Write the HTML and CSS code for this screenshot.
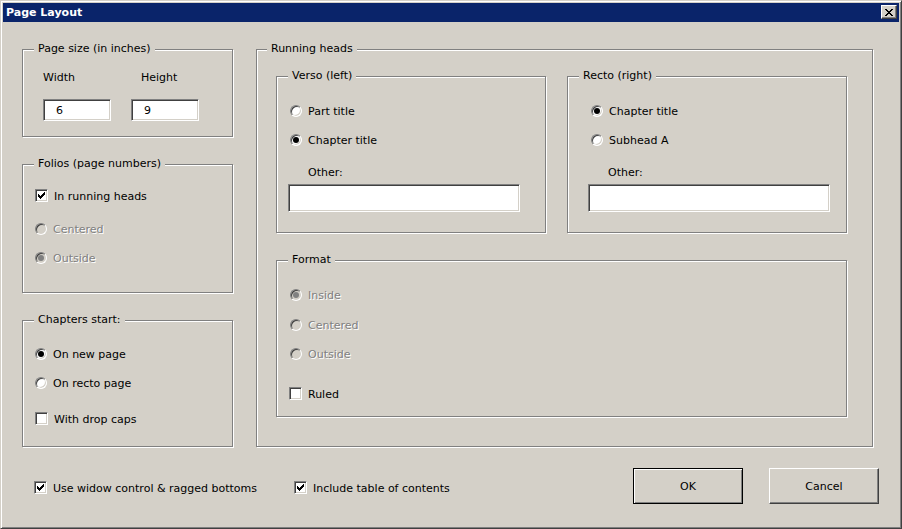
FILE: index.html
```html
<!DOCTYPE html>
<html>
<head>
<meta charset="utf-8">
<title>Page Layout</title>
<link rel="stylesheet" href="styles.css">
</head>
<body>
<div class="window">
  <div class="titlebar">
    <span class="title">Page Layout</span>
    <span class="close">
      <svg width="8" height="7" viewBox="0 0 8 7" shape-rendering="crispEdges"><path d="M0 0h2v1h-2z M6 0h2v1h-2z M1 1h2v1h-2z M5 1h2v1h-2z M2 2h4v1h-4z M3 3h2v1h-2z M2 4h4v1h-4z M1 5h2v1h-2z M5 5h2v1h-2z M0 6h2v1h-2z M6 6h2v1h-2z" fill="#000"/></svg>
    </span>
  </div>
  <div class="body">
    <div class="main">
      <div class="col">
        <div class="group g-size">
          <div class="gtitle">Page size (in inches)</div>
          <div class="size-grid">
            <span>Width</span>
            <span class="h-label">Height</span>
            <input class="num" type="text" value="6">
            <input class="num" type="text" value="9">
          </div>
        </div>
        <div class="group g-folios">
          <div class="gtitle">Folios (page numbers)</div>
          <div class="opt pad12 m18"><span class="check on"><svg width="7" height="7" viewBox="0 0 7 7" shape-rendering="crispEdges"><path d="M6 0h1v1h-1z M5 1h2v1h-2z M0 2h1v1h-1z M4 2h3v1h-3z M0 3h2v1h-2z M3 3h3v1h-3z M0 4h5v1h-5z M1 5h3v1h-3z M2 6h1v1h-1z" fill="#000"/></svg></span>In running heads</div>
          <div class="opt dis pad12 m19"><span class="radio"></span>Centered</div>
          <div class="opt dis pad12 m15"><span class="radio on"></span>Outside</div>
        </div>
        <div class="group g-chap">
          <div class="gtitle">Chapters start:</div>
          <div class="opt pad12 m20"><span class="radio on"></span>On new page</div>
          <div class="opt pad12 m15"><span class="radio"></span>On recto page</div>
          <div class="opt pad12 m22"><span class="check"></span>With drop caps</div>
        </div>
      </div>
      <div class="group g-heads">
        <div class="gtitle">Running heads</div>
        <div class="heads-row">
          <div class="group g-verso">
            <div class="gtitle">Verso (left)</div>
            <div class="opt pad13 m21"><span class="radio"></span>Part title</div>
            <div class="opt pad13 m15"><span class="radio on"></span>Chapter title</div>
            <div class="other-label verso-label">Other:</div>
            <input class="field verso-field" type="text" value="">
          </div>
          <div class="group g-recto">
            <div class="gtitle">Recto (right)</div>
            <div class="opt pad23 m21"><span class="radio on"></span>Chapter title</div>
            <div class="opt pad23 m15"><span class="radio"></span>Subhead A</div>
            <div class="other-label recto-label">Other:</div>
            <input class="field recto-field" type="text" value="">
          </div>
        </div>
        <div class="group g-format">
          <div class="gtitle">Format</div>
          <div class="opt dis pad13 m21"><span class="radio on"></span>Inside</div>
          <div class="opt dis pad13 m16"><span class="radio"></span>Centered</div>
          <div class="opt dis pad13 m15"><span class="radio"></span>Outside</div>
          <div class="opt pad12 m26"><span class="check"></span>Ruled</div>
        </div>
      </div>
    </div>
    <div class="footer">
      <div class="opt fchk first"><span class="check on"><svg width="7" height="7" viewBox="0 0 7 7" shape-rendering="crispEdges"><path d="M6 0h1v1h-1z M5 1h2v1h-2z M0 2h1v1h-1z M4 2h3v1h-3z M0 3h2v1h-2z M3 3h3v1h-3z M0 4h5v1h-5z M1 5h3v1h-3z M2 6h1v1h-1z" fill="#000"/></svg></span>Use widow control &amp; ragged bottoms</div>
      <div class="opt fchk"><span class="check on"><svg width="7" height="7" viewBox="0 0 7 7" shape-rendering="crispEdges"><path d="M6 0h1v1h-1z M5 1h2v1h-2z M0 2h1v1h-1z M4 2h3v1h-3z M0 3h2v1h-2z M3 3h3v1h-3z M0 4h5v1h-5z M1 5h3v1h-3z M2 6h1v1h-1z" fill="#000"/></svg></span>Include table of contents</div>
      <div class="buttons">
        <button class="btn default" type="button">OK</button>
        <button class="btn" type="button">Cancel</button>
      </div>
    </div>
  </div>
</div>
</body>
</html>
```
FILE: styles.css
```css
* { box-sizing: border-box; }

body {
  margin: 0;
  background: #d4d0c8;
  font-family: "DejaVu Sans", sans-serif;
  font-size: 11px;
  color: #000;
}

.window {
  width: 902px;
  height: 529px;
  background: #d4d0c8;
  border: 1px solid;
  border-color: #d4d0c8 #404040 #404040 #d4d0c8;
  box-shadow: inset 1px 1px 0 #fff, inset -1px -1px 0 #808080;
  padding: 2px;
}

.titlebar {
  height: 19px;
  background: #0a246a;
  display: flex;
  align-items: flex-start;
  justify-content: space-between;
  padding: 0 2px 0 3px;
  color: #fff;
  font-weight: bold;
  line-height: 19px;
}

.close {
  width: 16px;
  height: 14px;
  margin-top: 2px;
  background: #d4d0c8;
  border: 1px solid;
  border-color: #fff #404040 #404040 #fff;
  box-shadow: inset -1px -1px 0 #808080;
  display: flex;
  align-items: center;
  justify-content: center;
}
.close svg { display: block; }

.body {
  padding: 27px 20px 0 19px;
}

.main {
  display: flex;
  gap: 23px;
}

.col {
  display: flex;
  flex-direction: column;
  gap: 27px;
  width: 211px;
}

.group {
  border: 1px solid #808080;
  box-shadow: 1px 1px 0 #fff, inset 1px 1px 0 #fff;
}

.gtitle {
  width: fit-content;
  margin: -9px 0 0 11px;
  padding: 1px 4px 0;
  background: #d4d0c8;
  line-height: 14px;
  white-space: nowrap;
}

.g-size { height: 88px; }
.g-folios { height: 129px; }
.g-chap { height: 127px; }

.g-heads {
  width: 617px;
  height: 398px;
}
.g-heads > .gtitle { margin-left: 10px; }

.heads-row {
  display: flex;
  gap: 21px;
  margin: 20px 0 0 19px;
}

.g-verso { width: 270px; height: 157px; }
.g-recto { width: 280px; height: 157px; }
.g-format { width: 571px; height: 157px; margin: 27px 0 0 19px; }

.size-grid {
  display: grid;
  grid-template-columns: 68px 68px;
  column-gap: 20px;
  row-gap: 14px;
  margin: 15px 0 0 20px;
  line-height: 14px;
}
.h-label { padding-left: 10px; }

input {
  font: inherit;
  color: #000;
  background: #fff;
  border: 1px solid;
  border-color: #808080 #fff #fff #808080;
  box-shadow: inset 1px 1px 0 #404040, inset -1px -1px 0 #d4d0c8;
  outline: none;
  margin: 0;
}

.num {
  width: 68px;
  height: 22px;
  padding: 0 0 0 12px;
}

.other-label {
  line-height: 14px;
  margin-top: 19px;
}
.verso-label { padding-left: 31px; }
.recto-label { padding-left: 40px; }

.field {
  display: block;
  height: 28px;
  margin-top: 4px;
  padding: 0 4px;
}
.verso-field { width: 232px; margin-left: 11px; }
.recto-field { width: 242px; margin-left: 20px; }

.opt {
  display: flex;
  align-items: flex-start;
  gap: 6px;
  height: 14px;
  line-height: 16px;
  white-space: nowrap;
}
.pad12 { padding-left: 12px; }
.pad13 { padding-left: 13px; }
.pad23 { padding-left: 23px; }
.m15 { margin-top: 15px; }
.m16 { margin-top: 16px; }
.m18 { margin-top: 18px; }
.m19 { margin-top: 19px; }
.m20 { margin-top: 20px; }
.m21 { margin-top: 21px; }
.m22 { margin-top: 22px; }
.m26 { margin-top: 26px; }

.radio {
  flex: none;
  width: 12px;
  height: 12px;
  margin-top: 1px;
  border-radius: 50%;
  background: #fff;
  border: 1px solid;
  border-color: #808080 #fff #fff #808080;
  box-shadow: inset 1px 1px 0 #404040, inset -1px -1px 0 #d4d0c8;
  display: flex;
  align-items: center;
  justify-content: center;
}
.radio.on::after {
  content: "";
  width: 6px;
  height: 6px;
  border-radius: 50%;
  background: #000;
}

.check {
  flex: none;
  width: 13px;
  height: 13px;
  background: #fff;
  border: 1px solid;
  border-color: #808080 #fff #fff #808080;
  box-shadow: inset 1px 1px 0 #404040, inset -1px -1px 0 #d4d0c8;
  padding: 2px 0 0 2px;
}
.check svg { display: block; }

.dis {
  color: #808080;
  text-shadow: 1px 1px 0 #fff;
}
.dis .radio { background: #d4d0c8; }
.dis .radio.on::after { background: #808080; }

.footer {
  display: flex;
  align-items: flex-start;
  margin-top: 21px;
  padding-left: 12px;
}
.fchk { margin-top: 13px; }
.fchk.first { width: 260px; }

.buttons {
  margin-left: auto;
  display: flex;
  gap: 26px;
}

.btn {
  width: 110px;
  height: 36px;
  font: inherit;
  color: #000;
  background: #d4d0c8;
  border: 1px solid;
  border-color: #fff #404040 #404040 #fff;
  box-shadow: inset -1px -1px 0 #808080;
  padding: 0;
  margin: 0;
}
.btn.default {
  border-color: #000;
  box-shadow: inset 1px 1px 0 #fff, inset -1px -1px 0 #808080;
}
```
